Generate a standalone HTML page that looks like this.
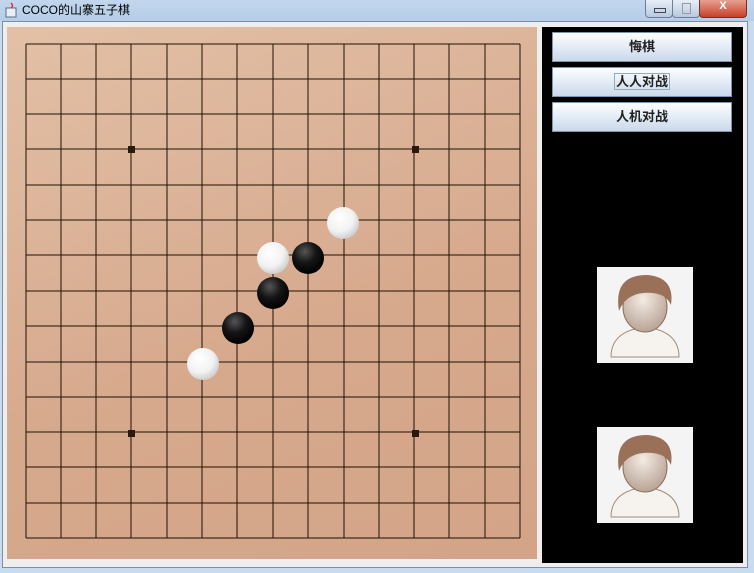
<!DOCTYPE html>
<html><head><meta charset="utf-8"><style>
html,body{margin:0;padding:0;width:754px;height:573px;overflow:hidden;background:#c9dbee;font-family:"Liberation Sans","Noto Sans CJK SC",sans-serif}
.title{position:absolute;left:0;top:0;width:754px;height:21px;background:linear-gradient(#c2d7ee,#b6cde8)}
.title span{position:absolute;left:22px;top:1px;font-size:12px;color:#000}
.ctl{position:absolute;top:0;height:17px;border:1px solid #6d7f97;border-top:none;border-radius:0 0 4px 4px;background:linear-gradient(#e6eef8,#b8c9de)}
.content{position:absolute;left:2px;top:21px;width:744px;height:545px;background:#eeeeee;border:1px solid #7d8fa6}
.board{position:absolute;left:7px;top:27px;width:530px;height:532px;background:linear-gradient(160deg,#e2c0a6,#d6a88c 60%,#d3a488)}
.panel{position:absolute;left:542px;top:27px;width:201px;height:536px;background:#000}
.btn{position:absolute;left:552px;width:178px;height:28px;border:1px solid #7f95ae;background:linear-gradient(#fdfeff,#e4ecf6 50%,#c9d8ea);font-size:13px;font-weight:bold;color:#222;text-align:center;line-height:28px}
.av{position:absolute;left:597px;width:96px;height:96px;background:#f4f4f4}
</style></head><body>
<div class="title"><span>COCO的山寨五子棋</span>
<svg style="position:absolute;left:4px;top:2px" width="14" height="16"><rect x="2" y="6" width="10" height="9" fill="#e8eef6" stroke="#5a6f8a"/><path d="M7 1 q3 3 0 5" stroke="#d34" fill="none" stroke-width="1.5"/></svg>
<div class="ctl" style="left:645px;width:26px"><div style="position:absolute;left:8px;top:8px;width:10px;height:3px;border:1px solid #445"></div></div>
<div class="ctl" style="left:672px;width:26px"><div style="position:absolute;left:9px;top:3px;width:7px;height:9px;border:1px solid #99a"></div></div>
<div class="ctl" style="left:699px;width:46px;background:linear-gradient(#e8a090,#c7402a);border-color:#7a3020;color:#fff;font-size:11px;text-align:center;font-weight:bold">X</div>
</div>
<div class="content"></div>
<div class="board"></div>
<svg style="position:absolute;left:0;top:0" width="754" height="573">
<g stroke="#1e1206" stroke-width="1" shape-rendering="crispEdges">
<line x1="26" y1="44" x2="26" y2="538"/><line x1="61" y1="44" x2="61" y2="538"/><line x1="96" y1="44" x2="96" y2="538"/><line x1="131" y1="44" x2="131" y2="538"/><line x1="167" y1="44" x2="167" y2="538"/><line x1="202" y1="44" x2="202" y2="538"/><line x1="237" y1="44" x2="237" y2="538"/><line x1="273" y1="44" x2="273" y2="538"/><line x1="308" y1="44" x2="308" y2="538"/><line x1="344" y1="44" x2="344" y2="538"/><line x1="379" y1="44" x2="379" y2="538"/><line x1="414" y1="44" x2="414" y2="538"/><line x1="449" y1="44" x2="449" y2="538"/><line x1="485" y1="44" x2="485" y2="538"/><line x1="520" y1="44" x2="520" y2="538"/>
<line y1="44" x1="26" y2="44" x2="520"/><line y1="79" x1="26" y2="79" x2="520"/><line y1="114" x1="26" y2="114" x2="520"/><line y1="149" x1="26" y2="149" x2="520"/><line y1="185" x1="26" y2="185" x2="520"/><line y1="220" x1="26" y2="220" x2="520"/><line y1="255" x1="26" y2="255" x2="520"/><line y1="291" x1="26" y2="291" x2="520"/><line y1="326" x1="26" y2="326" x2="520"/><line y1="362" x1="26" y2="362" x2="520"/><line y1="397" x1="26" y2="397" x2="520"/><line y1="432" x1="26" y2="432" x2="520"/><line y1="467" x1="26" y2="467" x2="520"/><line y1="503" x1="26" y2="503" x2="520"/><line y1="538" x1="26" y2="538" x2="520"/>
</g>
<g fill="#2a1a0e"><rect x="128" y="146" width="7" height="7"/><rect x="412" y="146" width="7" height="7"/><rect x="128" y="430" width="7" height="7"/><rect x="412" y="430" width="7" height="7"/></g>
<defs>
<radialGradient id="w" cx="0.4" cy="0.35" r="0.7"><stop offset="0" stop-color="#fff"/><stop offset="0.6" stop-color="#f2f2f2"/><stop offset="1" stop-color="#c8c8c8"/></radialGradient>
<radialGradient id="b" cx="0.4" cy="0.3" r="0.7"><stop offset="0" stop-color="#555"/><stop offset="0.5" stop-color="#151515"/><stop offset="1" stop-color="#000"/></radialGradient>
<radialGradient id="f" cx=".45" cy=".35" r=".7"><stop offset="0" stop-color="#f3ece6"/><stop offset="1" stop-color="#b49e8e"/></radialGradient>
</defs>
<circle cx="343" cy="223" r="16" fill="url(#w)"/>
<circle cx="273" cy="258" r="16" fill="url(#w)"/>
<circle cx="308" cy="258" r="16" fill="url(#b)"/>
<circle cx="273" cy="293" r="16" fill="url(#b)"/>
<circle cx="238" cy="328" r="16" fill="url(#b)"/>
<circle cx="203" cy="364" r="16" fill="url(#w)"/>
</svg>
<div class="panel"></div>
<div class="btn" style="top:32px">悔棋</div>
<div class="btn" style="top:67px"><span style="border:1px solid #9ab;padding:0 1px">人人对战</span></div>
<div class="btn" style="top:102px">人机对战</div>
<div class="av" style="top:267px"><svg width="96" height="96"><path d="M14 90 q0-26 34-30 q34 4 34 30z" fill="#f6f2ee" stroke="#a78a78"/><ellipse cx="48" cy="40" rx="22" ry="25" fill="url(#f)" stroke="#8d6e5c"/><path d="M22 44 q-6-36 28-36 q28 2 24 30 q-6-14-28-12 q-18 2-24 18z" fill="#9a7058"/></svg></div>
<div class="av" style="top:427px"><svg width="96" height="96"><path d="M14 90 q0-26 34-30 q34 4 34 30z" fill="#f6f2ee" stroke="#a78a78"/><ellipse cx="48" cy="40" rx="22" ry="25" fill="url(#f)" stroke="#8d6e5c"/><path d="M22 44 q-6-36 28-36 q28 2 24 30 q-6-14-28-12 q-18 2-24 18z" fill="#9a7058"/></svg></div>
</body></html>
